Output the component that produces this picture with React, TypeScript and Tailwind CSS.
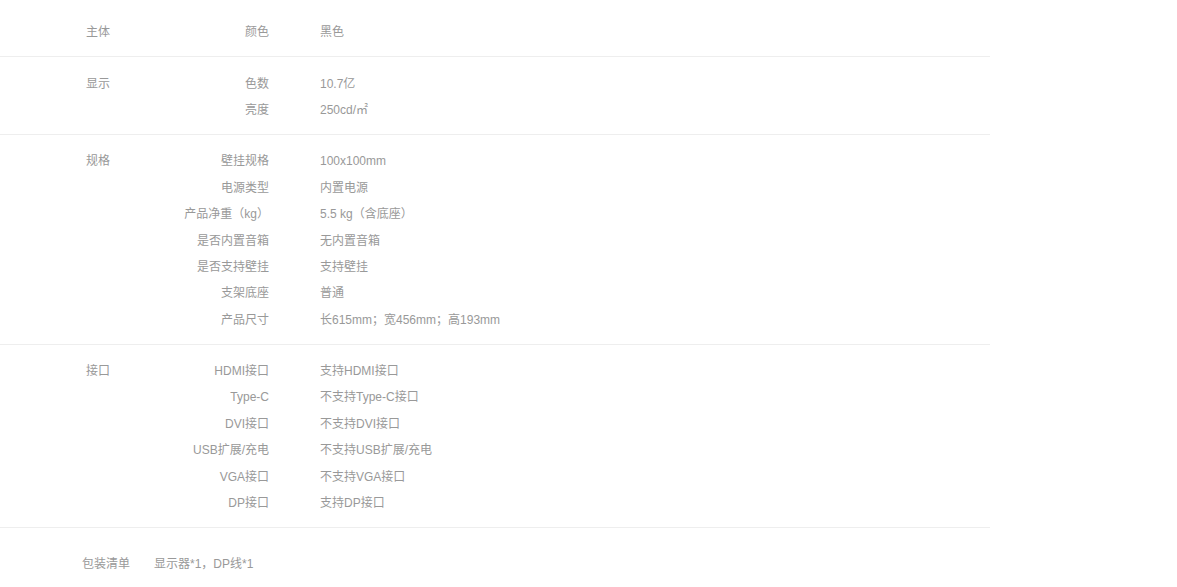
import React from "react";

type Section = { label: string; rows: [string, string][] };

const sections: Section[] = [
  { label: "主体", rows: [["颜色", "黑色"]] },
  {
    label: "显示",
    rows: [
      ["色数", "10.7亿"],
      ["亮度", "250cd/㎡"],
    ],
  },
  {
    label: "规格",
    rows: [
      ["壁挂规格", "100x100mm"],
      ["电源类型", "内置电源"],
      ["产品净重（kg）", "5.5 kg（含底座）"],
      ["是否内置音箱", "无内置音箱"],
      ["是否支持壁挂", "支持壁挂"],
      ["支架底座", "普通"],
      ["产品尺寸", "长615mm；宽456mm；高193mm"],
    ],
  },
  {
    label: "接口",
    rows: [
      ["HDMI接口", "支持HDMI接口"],
      ["Type-C", "不支持Type-C接口"],
      ["DVI接口", "不支持DVI接口"],
      ["USB扩展/充电", "不支持USB扩展/充电"],
      ["VGA接口", "不支持VGA接口"],
      ["DP接口", "支持DP接口"],
    ],
  },
];

export default function App() {
  return (
    <div
      className="w-[1177px] min-h-[587px] bg-white text-[12px] text-[#999]"
      style={{ fontFamily: '"Liberation Sans", "Noto Sans CJK SC", sans-serif' }}
    >
      <div className="w-[990px] pt-[6px]">
        {sections.map((s) => (
          <div key={s.label} className="flex pt-[13px] pb-[11px] pl-[86px] border-b border-[#eee]">
            <div className="w-[60px] h-[26.4px] flex items-center">{s.label}</div>
            <div className="flex flex-col">
              {s.rows.map(([k, v]) => (
                <div key={k} className="flex h-[26.4px] items-center">
                  <div className="w-[123px] text-right">{k}</div>
                  <div className="ml-[51px]">{v}</div>
                </div>
              ))}
            </div>
          </div>
        ))}
        <div className="flex items-center pl-[82px] h-[72px]">
          <div>包装清单</div>
          <div className="ml-[24px]">显示器*1，DP线*1</div>
        </div>
      </div>
    </div>
  );
}
